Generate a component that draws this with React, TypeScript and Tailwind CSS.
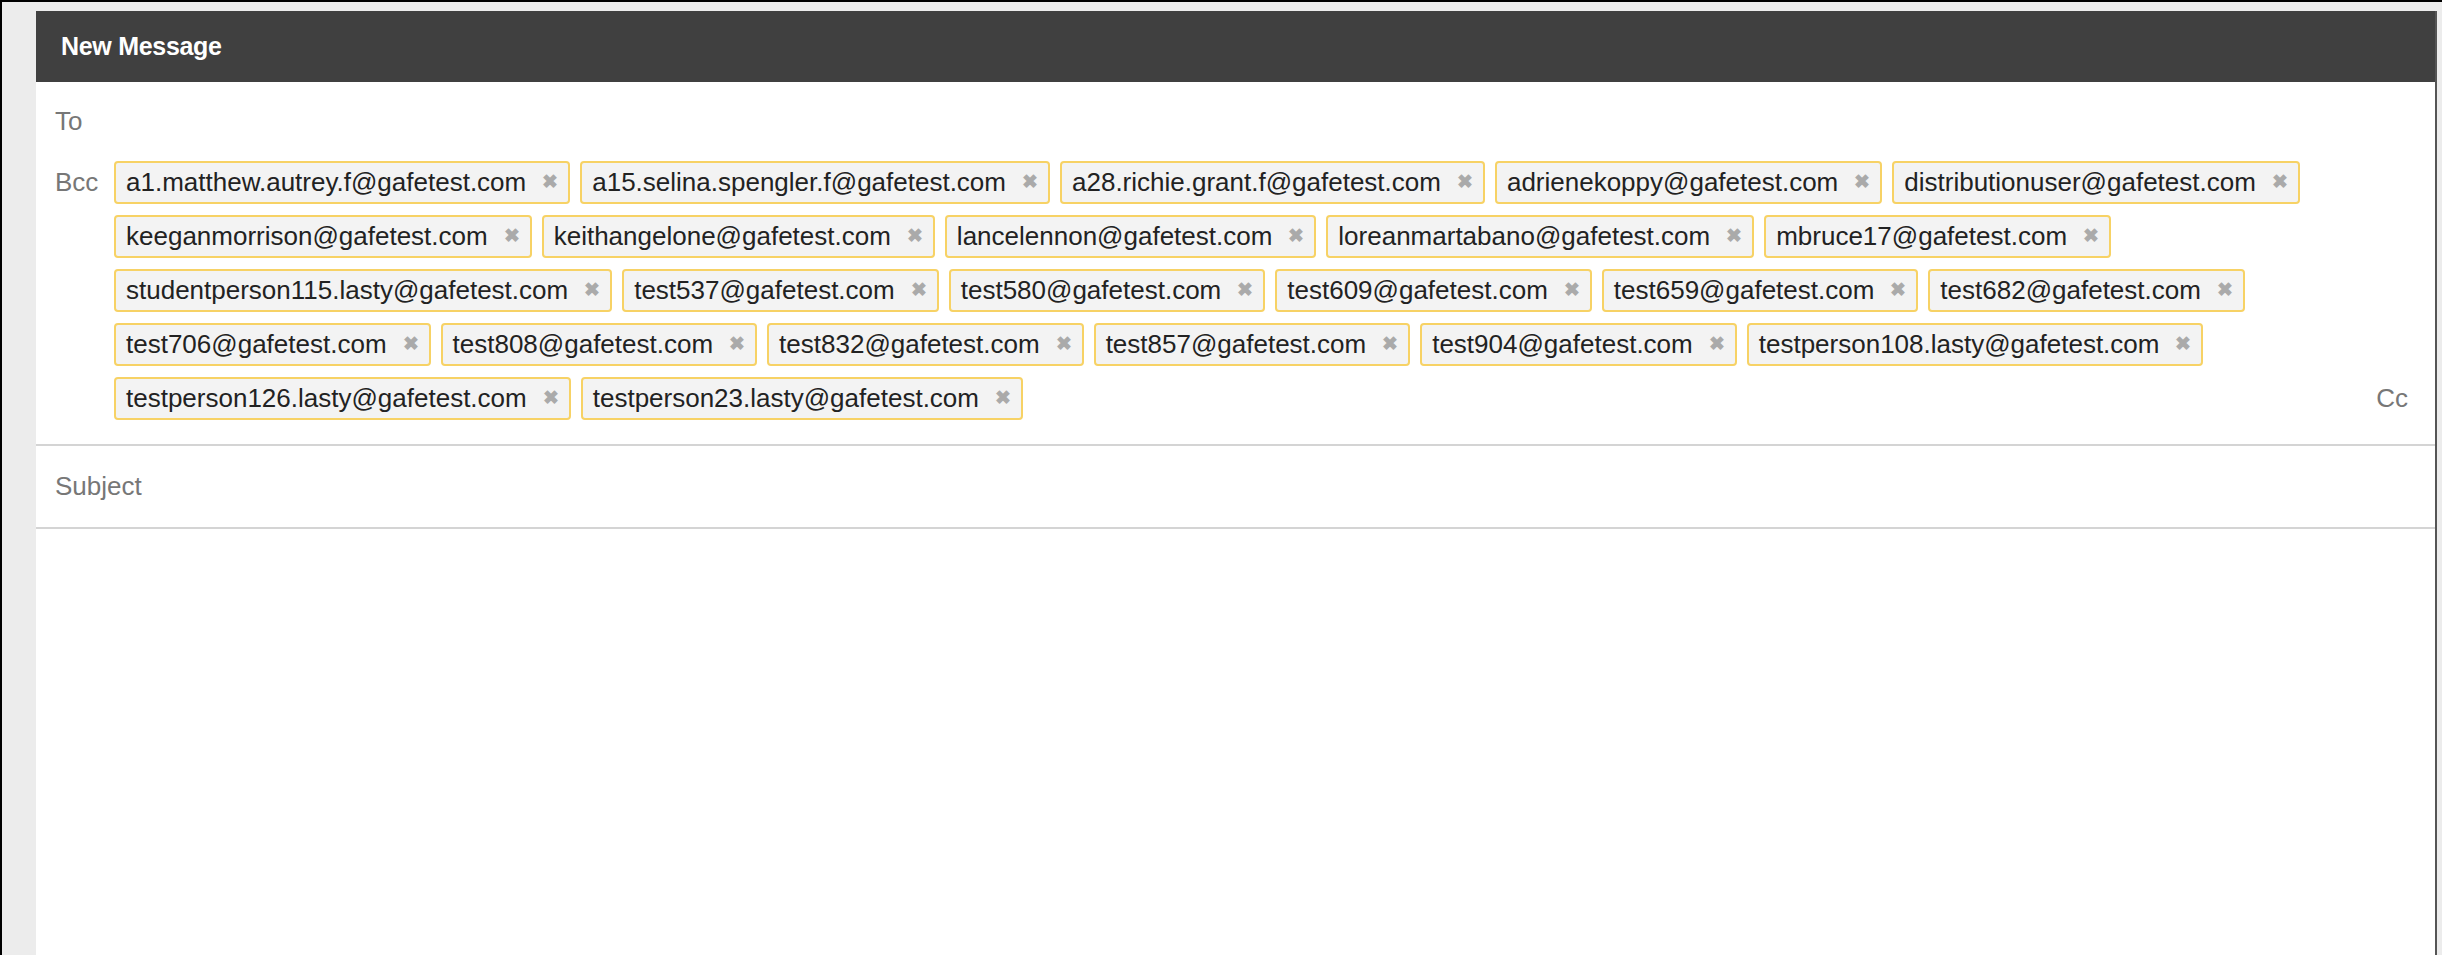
const bcc = [
  "a1.matthew.autrey.f@gafetest.com","a15.selina.spengler.f@gafetest.com","a28.richie.grant.f@gafetest.com","adrienekoppy@gafetest.com","distributionuser@gafetest.com",
  "keeganmorrison@gafetest.com","keithangelone@gafetest.com","lancelennon@gafetest.com","loreanmartabano@gafetest.com","mbruce17@gafetest.com",
  "studentperson115.lasty@gafetest.com","test537@gafetest.com","test580@gafetest.com","test609@gafetest.com","test659@gafetest.com","test682@gafetest.com",
  "test706@gafetest.com","test808@gafetest.com","test832@gafetest.com","test857@gafetest.com","test904@gafetest.com","testperson108.lasty@gafetest.com",
  "testperson126.lasty@gafetest.com","testperson23.lasty@gafetest.com",
];

export default function App() {
  return (
    <div className="w-[2442px] h-[955px] bg-[#ececec] border-t-2 border-l-2 border-black flex flex-col overflow-hidden" style={{ fontFamily: '"Liberation Sans", Arial, sans-serif' }}>
      <div className="flex-1 ml-[34px] mt-[9px] mr-[5px] bg-white border-r-2 border-[#555] flex flex-col">
        <div className="h-[71px] bg-[#404040] flex items-center pl-[25px] text-white text-[25px] font-bold tracking-[-0.3px]">New Message</div>
        <div className="h-[79px] flex items-center pl-[19px] text-[26px] text-[#777]">To</div>
        <div className="flex items-start pl-[19px] pr-[27px] pb-[24px] border-b-2 border-[#d4d4d4]">
          <div className="w-[59px] text-[26px] text-[#777] leading-[43px] shrink-0">Bcc</div>
          <div className="flex flex-wrap gap-x-[10px] gap-y-[11px] w-[2228px]">
            {bcc.map((e) => (
              <div key={e} className="h-[43px] flex items-center bg-[#f3f3f3] border-2 border-[#f7d265] rounded-[4px] pl-[10px] pr-[10px] text-[26px] text-[#222]">
                <span>{e}</span>
                <span className="ml-[16px] text-[#aaa] text-[19px] font-bold">✖</span>
              </div>
            ))}
          </div>
          <div className="flex-1 self-end text-right text-[26px] text-[#777] leading-[43px]">Cc</div>
        </div>
        <div className="h-[83px] flex items-center pl-[19px] text-[26px] text-[#777] border-b-2 border-[#d4d4d4]">Subject</div>
        <div className="flex-1" />
      </div>
    </div>
  );
}
